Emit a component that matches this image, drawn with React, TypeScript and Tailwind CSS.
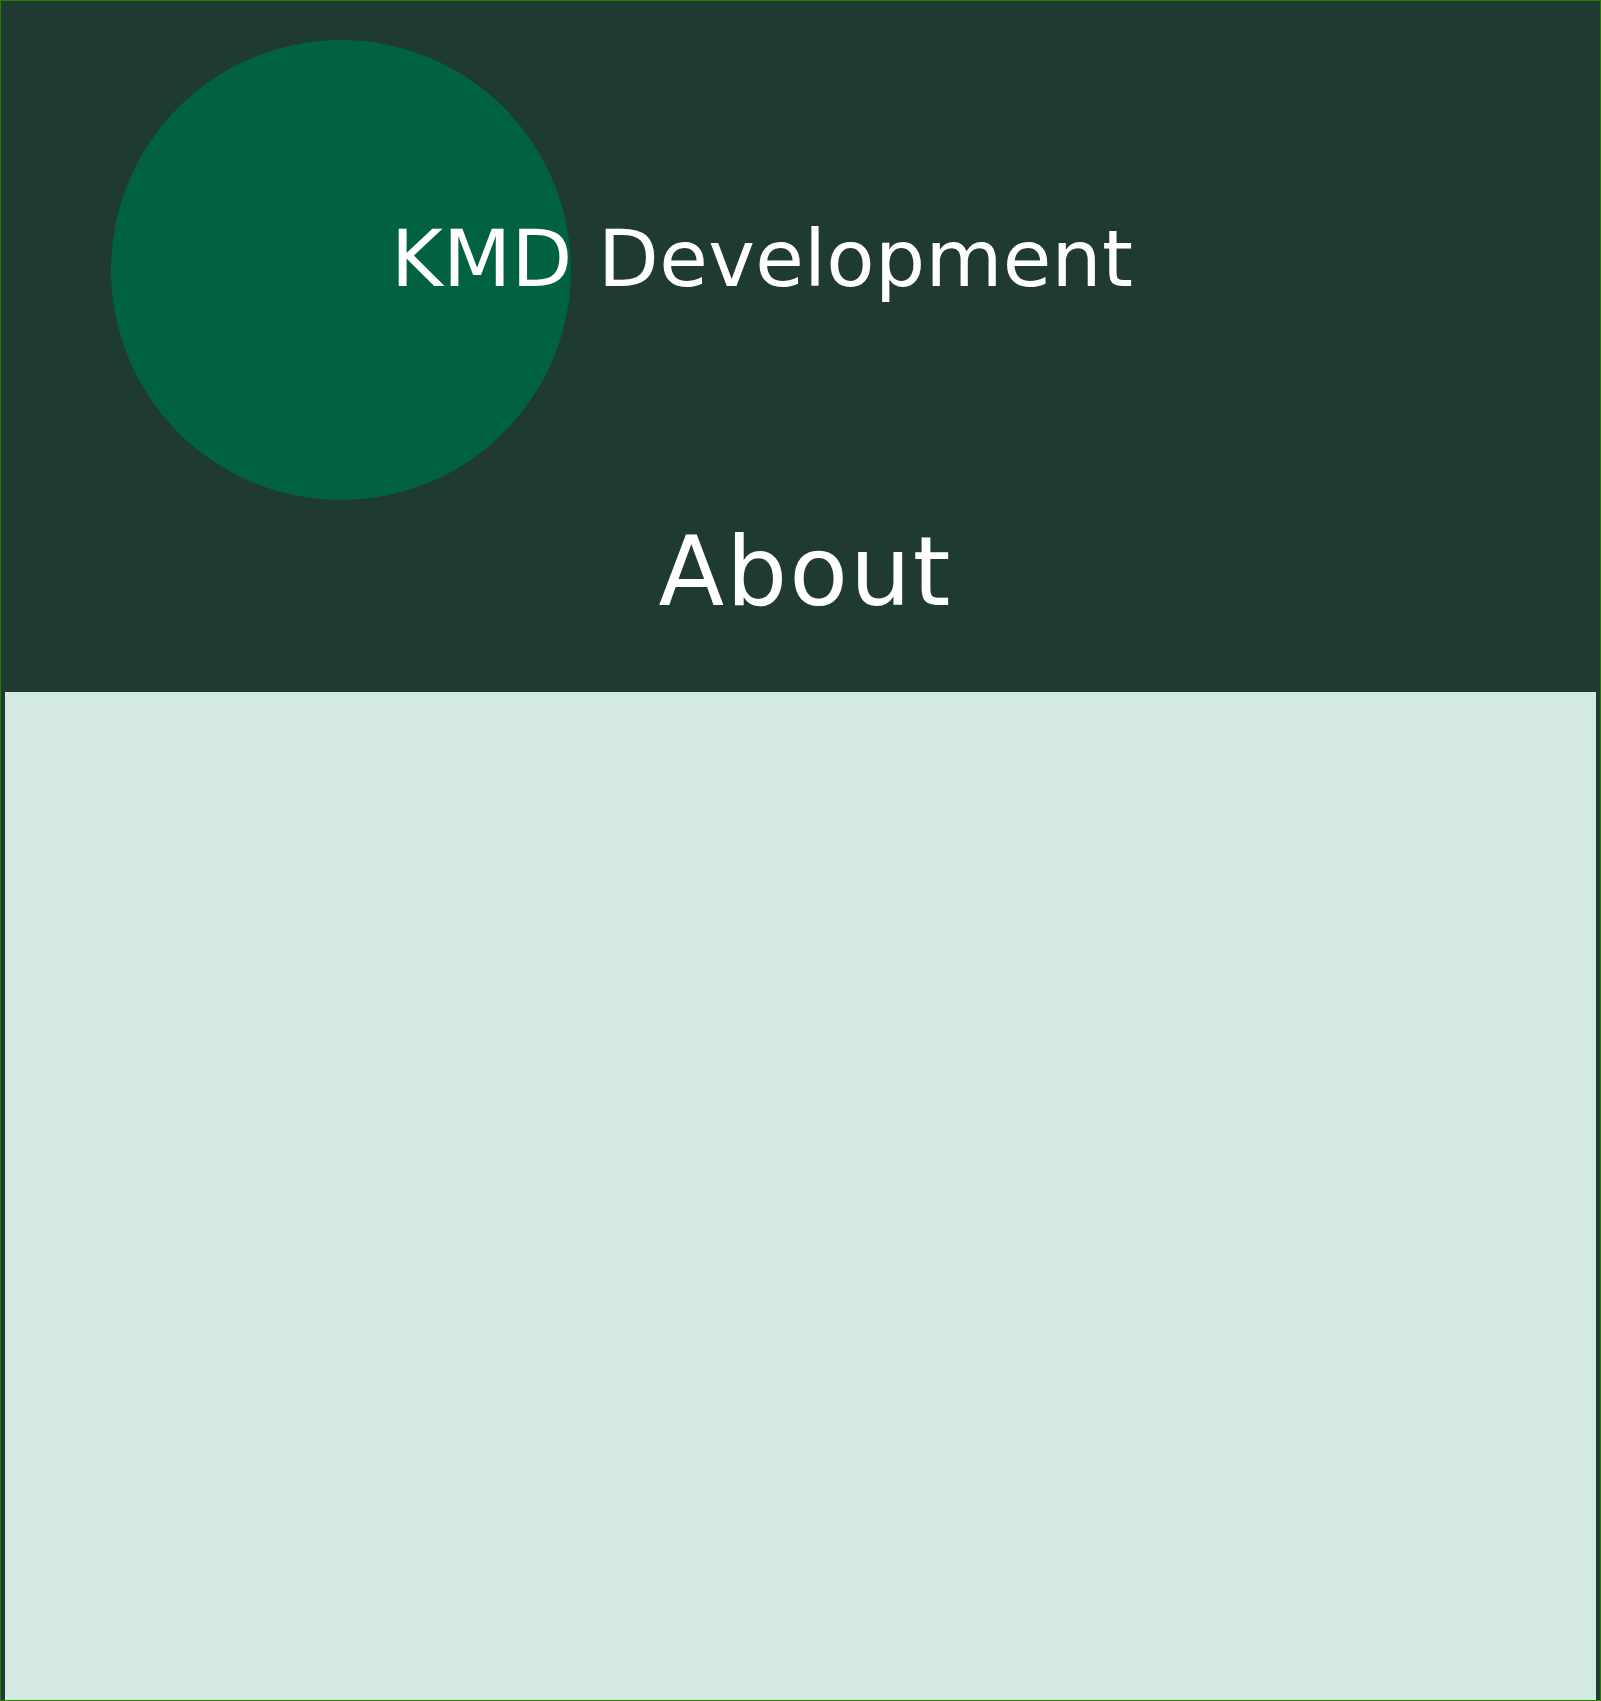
export default function App() {
  return (
    <div
      className="h-[1701px] border border-[#2a7a04] bg-[#1f3933] flex flex-col px-1 text-white"
      style={{ fontFamily: '"DejaVu Sans", Verdana, sans-serif' }}
    >
      {/* Header */}
      <header className="relative h-[691px] shrink-0 flex flex-col">
        <div className="absolute left-[106px] top-[39px] w-[460px] h-[460px] rounded-full bg-[#006241]" />
        <h1 className="relative mt-[212px] pl-[386px] text-[79px] leading-[93px] font-normal tracking-[0.3px]">
          KMD Development
        </h1>
        <h2 className="relative mt-[210px] pl-[10px] text-center text-[96px] leading-[112px] font-normal tracking-[2px]">
          About
        </h2>
      </header>

      {/* Content */}
      <main className="flex-1 bg-[#d4e9e2]" />
    </div>
  );
}
